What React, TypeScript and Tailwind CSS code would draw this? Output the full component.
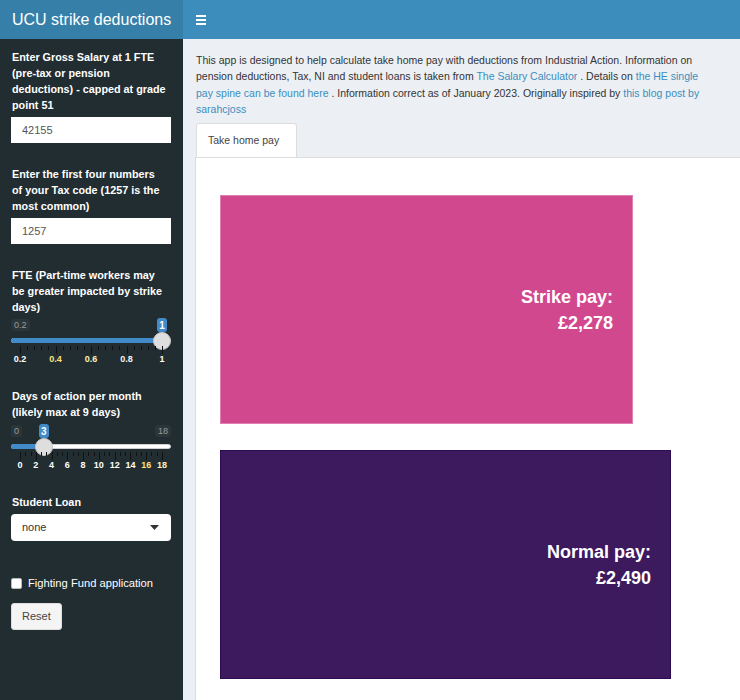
import React from 'react';

const font = { fontFamily: '"Liberation Sans", Arial, sans-serif' };

interface SliderProps {
  min: number;
  max: number;
  value: number;
  labels: string[];
  small: number;
  labelColors: string[];
}

// ion-range-slider look: track, handle, value bubble and grid
const RangeSlider = ({ min, max, value, labels, small, labelColors }: SliderProps) => {
  const left = 9;
  const span = 142;
  const pos = left + ((value - min) / (max - min)) * span;
  const sections = labels.length - 1;
  const step = span / sections;

  const ticks: { x: number; big: boolean }[] = [];
  for (let i = 0; i <= sections; i++) {
    ticks.push({ x: left + i * step, big: true });
    if (i < sections) {
      for (let j = 1; j <= small; j++) {
        ticks.push({ x: left + i * step + (j * step) / (small + 1), big: false });
      }
    }
  }

  return (
    <div className="relative h-[46px] w-[160px]">
      <span className="absolute left-0 top-[1px] rounded-[3px] bg-[#2b363b] px-[3px] text-[9px] leading-[12px] text-[#9a9a9a]">
        {labels[0]}
      </span>
      {value !== max && (
        <span className="absolute right-0 top-[1px] rounded-[3px] bg-[#2b363b] px-[3px] text-[9px] leading-[12px] text-[#9a9a9a]">
          {String(max)}
        </span>
      )}
      <span
        className="absolute top-0 flex h-[14px] w-[10px] -translate-x-1/2 items-center justify-center rounded-[3px] bg-[#428bca] text-[10px] font-bold text-white"
        style={{ left: pos }}
      >
        {String(value)}
      </span>
      <div className="absolute left-0 top-[20px] h-[5px] w-[160px] rounded-full border border-[#cfcfcf] bg-white" />
      <div className="absolute left-0 top-[20px] h-[5px] rounded-l-full bg-[#428bca]" style={{ width: pos }} />
      <div
        className="absolute top-[14px] h-[18px] w-[18px] -translate-x-1/2 rounded-full border border-[#c8c8c8] bg-[#dedede]"
        style={{ left: pos }}
      />
      {ticks.map((t, i) => (
        <div
          key={i}
          className={`absolute top-[28px] w-px bg-[#111] ${t.big ? 'h-[8px]' : 'h-[4px]'}`}
          style={{ left: Math.round(t.x) }}
        />
      ))}
      {labels.map((l, i) => (
        <span
          key={l}
          className="absolute top-[35px] -translate-x-1/2 text-[9px] font-bold leading-[12px]"
          style={{ left: left + i * step, color: labelColors[i] }}
        >
          {l}
        </span>
      ))}
    </div>
  );
};

// labels are broken by hand so they wrap as in the shiny sidebar
const Label = ({ lines }: { lines: string[] }) => (
  <label className="block whitespace-nowrap pl-px text-[10.8px] font-bold leading-[16px] text-white">
    {lines.map((l, i) => (
      <span key={i} className="block">
        {l}
      </span>
    ))}
  </label>
);

const Sidebar = () => (
  <aside className="w-[183px] shrink-0 bg-[#222d32] px-[11px] pt-[10px]">
    <Label lines={['Enter Gross Salary at 1 FTE', '(pre-tax or pension', 'deductions) - capped at grade', 'point 51']} />
    <input
      readOnly
      value="42155"
      className="mt-[4px] block h-[26px] w-[160px] bg-white px-[11px] text-[11px] text-[#555] outline-none"
    />
    <div className="mt-[23px]">
      <Label lines={['Enter the first four numbers', 'of your Tax code (1257 is the', 'most common)']} />
    </div>
    <input
      readOnly
      value="1257"
      className="mt-[4px] block h-[26px] w-[160px] bg-white px-[11px] text-[11px] text-[#555] outline-none"
    />
    <div className="mt-[23px]">
      <Label lines={['FTE (Part-time workers may', 'be greater impacted by strike', 'days)']} />
    </div>
    <div className="mt-[3px]">
      <RangeSlider
        min={0.2}
        max={1}
        value={1}
        small={4}
        labels={['0.2', '0.4', '0.6', '0.8', '1']}
        labelColors={['#ffffff', '#ffe27a', '#fff3b8', '#f4f4f4', '#ffffff']}
      />
    </div>
    <div className="mt-[24px]">
      <Label lines={['Days of action per month', '(likely max at 9 days)']} />
    </div>
    <div className="mt-[4px]">
      <RangeSlider
        min={0}
        max={18}
        value={3}
        small={2}
        labels={['0', '2', '4', '6', '8', '10', '12', '14', '16', '18']}
        labelColors={['#fff', '#fff', '#fff', '#fff', '#fff', '#fff', '#fff', '#fff', '#ffe27a', '#fff3b8']}
      />
    </div>
    <div className="mt-[24px]">
      <Label lines={['Student Loan']} />
    </div>
    <div className="mt-[4px] flex h-[27px] w-[160px] items-center justify-between rounded-[4px] bg-white pl-[11px] pr-[12px]">
      <span className="text-[11px] text-[#333]">none</span>
      <svg width="9" height="5" viewBox="0 0 9 5">
        <path d="M0 0h9L4.5 5z" fill="#333" />
      </svg>
    </div>
    <div className="mt-[34px] flex items-center gap-[6px]">
      <span className="block h-[11px] w-[11px] rounded-[2px] border border-[#bbb] bg-white" />
      <span className="text-[11.2px] text-white">Fighting Fund application</span>
    </div>
    <button className="mt-[11px] h-[27px] rounded-[3px] border border-[#ddd] bg-[#f4f4f4] px-[10px] text-[11px] text-[#444]">
      Reset
    </button>
  </aside>
);

const PayBox = ({ title, amount, className }: { title: string; amount: string; className: string }) => (
  <div className={`flex h-[229px] flex-col items-end justify-center pr-[19px] ${className}`}>
    <p className="text-[18px] font-bold leading-[26px] text-white">{title}</p>
    <p className="text-[18px] font-bold leading-[26px] text-white">{amount}</p>
  </div>
);

export default function App() {
  return (
    <div className="flex h-[700px] w-[740px] flex-col overflow-hidden" style={font}>
      <header className="flex h-[39px] shrink-0">
        <div className="flex w-[183px] items-center bg-[#367fa9] pl-[12px] text-[16px] text-white">
          UCU strike deductions
        </div>
        <div className="flex flex-1 items-center bg-[#3c8dbc] pl-[13px]">
          <div className="flex w-[10px] flex-col gap-[2px]">
            <span className="block h-[2px] bg-white" />
            <span className="block h-[2px] bg-white" />
            <span className="block h-[2px] bg-white" />
          </div>
        </div>
      </header>
      <div className="flex flex-1">
        <Sidebar />
        <main className="flex flex-1 flex-col bg-[#ecf0f5] pl-[13px] pt-[13px]">
          <p className="w-[516px] text-[10.5px] leading-[16.3px] text-[#333]">
            This app is designed to help calculate take home pay with deductions from Industrial Action. Information on
            pension deductions, Tax, NI and student loans is taken from{' '}
            <a className="text-[#3c8dbc]">The Salary Calculator</a> . Details on{' '}
            <a className="text-[#3c8dbc]">the HE single pay spine can be found here</a> . Information correct as of
            January 2023. Originally inspired by <a className="text-[#3c8dbc]">this blog post by sarahcjoss</a>
          </p>
          <div className="mt-[6px] flex">
            <div className="-mb-px flex h-[35px] w-[101px] items-center rounded-t-[3px] border border-b-0 border-[#ddd] bg-white pl-[11px] text-[10.5px] text-[#444]">
              Take home pay
            </div>
          </div>
          <div className="-ml-px flex flex-1 flex-col gap-[26px] border-l border-t border-[#ddd] bg-white pl-[24px] pt-[37px]">
            <PayBox
              title="Strike pay:"
              amount="£2,278"
              className="w-[413px] border border-[#e07fb2] bg-[#d2488f]"
            />
            <PayBox
              title="Normal pay:"
              amount="£2,490"
              className="w-[451px] border border-[#2b0b52] bg-[#3d1a5d]"
            />
          </div>
        </main>
      </div>
    </div>
  );
}
